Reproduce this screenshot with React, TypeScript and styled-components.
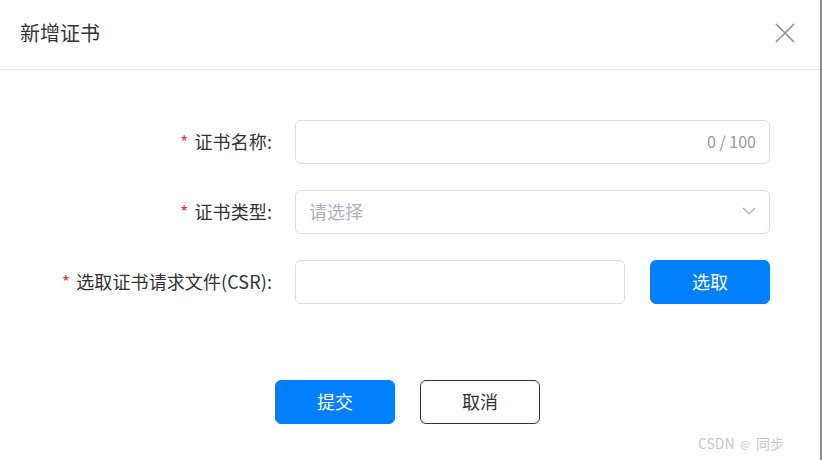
import { FC } from 'react';
import styled, { createGlobalStyle } from 'styled-components';

const GlobalStyle = createGlobalStyle`
  html, body {
    margin: 0;
    padding: 0;
    background: #8c8c8c;
  }
  body {
    font-family: "Noto Sans CJK SC", "Noto Sans", "Liberation Sans", sans-serif;
    color: #333;
  }
  * {
    box-sizing: border-box;
  }
`;

const Dialog = styled.div`
  position: relative;
  width: 820px;
  height: 460px;
  background: #fff;
  display: flex;
  flex-direction: column;
`;

const Header = styled.div`
  height: 70px;
  border-bottom: 1px solid #e6e6e6;
  display: flex;
  align-items: center;
  justify-content: space-between;
  padding: 0 24px 4px 20px;
`;

const Title = styled.h2`
  margin: 0;
  font-size: 20px;
  font-weight: 400;
  color: #333;
`;

const CloseButton = styled.button`
  border: 0;
  background: none;
  padding: 0;
  width: 22px;
  height: 22px;
  display: flex;
  align-items: center;
  justify-content: center;
  cursor: pointer;
`;

const Form = styled.form`
  padding-top: 50px;
  display: flex;
  flex-direction: column;
  gap: 26px;
`;

const Row = styled.div`
  display: grid;
  grid-template-columns: 272px 475px;
  column-gap: 23px;
  align-items: center;
`;

const Label = styled.label`
  text-align: right;
  font-size: 18px;
  color: #333;
  white-space: nowrap;
  letter-spacing: 0.1px;
  padding-bottom: 3px;
`;

const Required = styled.span`
  color: #f0393b;
  margin-right: 6px;
`;

const Field = styled.div<{ $width?: number }>`
  height: 44px;
  width: ${(p) => (p.$width ? `${p.$width}px` : '100%')};
  border: 1px solid #dcdde6;
  border-radius: 6px;
  display: flex;
  align-items: center;
  justify-content: space-between;
  padding: 0 13px 2px;
  background: #fff;
`;

const Counter = styled.span`
  margin-left: auto;
  font-size: 16px;
  color: #999;
`;

const Placeholder = styled.span`
  font-size: 18px;
  color: #aeb1bb;
`;

const FileLine = styled.div`
  display: flex;
  align-items: center;
  justify-content: space-between;
`;

const Button = styled.button<{ $primary?: boolean }>`
  width: 120px;
  height: 44px;
  padding: 0 0 3px;
  border-radius: 6px;
  font-family: inherit;
  font-size: 18px;
  cursor: pointer;
  background: ${(p) => (p.$primary ? '#0080ff' : '#fff')};
  color: ${(p) => (p.$primary ? '#fff' : '#333')};
  border: 1px solid ${(p) => (p.$primary ? '#0080ff' : '#333')};
`;

const Footer = styled.div`
  margin-top: 76px;
  display: flex;
  justify-content: center;
  gap: 25px;
  padding-right: 5px;
`;

const Watermark = styled.div`
  position: absolute;
  right: 36px;
  bottom: 7px;
  font-size: 14px;
  color: #c8c8c8;
  display: flex;
  align-items: center;
  gap: 6px;
`;

const At = styled.span`
  font-size: 10px;
`;

const CloseIcon = () => (
  <svg width="20" height="20" viewBox="0 0 20 20">
    <path d="M1 1 L19 19 M19 1 L1 19" stroke="#8e8e8e" strokeWidth="1.6" fill="none" />
  </svg>
);

const Chevron = () => (
  <svg width="14" height="8" viewBox="0 0 14 8">
    <path d="M1 1 L7 7 L13 1" stroke="#a8abb2" strokeWidth="1.2" fill="none" />
  </svg>
);

const App: FC = () => {
  return (
    <>
      <GlobalStyle />
      <Dialog>
        <Header>
          <Title>新增证书</Title>
          <CloseButton aria-label="关闭">
            <CloseIcon />
          </CloseButton>
        </Header>
        <Form onSubmit={(e) => e.preventDefault()}>
          <Row>
            <Label>
              <Required>*</Required>证书名称:
            </Label>
            <Field>
              <Counter>0 / 100</Counter>
            </Field>
          </Row>
          <Row>
            <Label>
              <Required>*</Required>证书类型:
            </Label>
            <Field>
              <Placeholder>请选择</Placeholder>
              <Chevron />
            </Field>
          </Row>
          <Row>
            <Label>
              <Required>*</Required>选取证书请求文件(CSR):
            </Label>
            <FileLine>
              <Field $width={330} />
              <Button $primary type="button">
                选取
              </Button>
            </FileLine>
          </Row>
        </Form>
        <Footer>
          <Button $primary type="submit">
            提交
          </Button>
          <Button type="button">取消</Button>
        </Footer>
        <Watermark>
          CSDN <At>@</At> 同步
        </Watermark>
      </Dialog>
    </>
  );
};

export default App;
